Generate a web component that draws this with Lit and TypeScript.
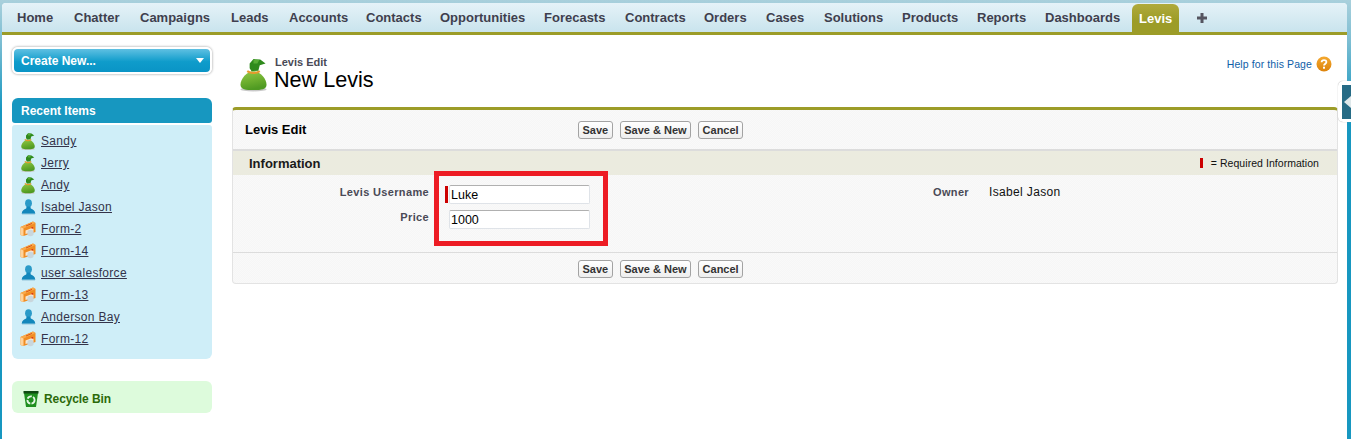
import { LitElement, html, css } from 'lit';
import { customElement } from 'lit/decorators.js';

// width is the distance to the next tab's text, so the strip keeps its rhythm
const TABS = [
  { name: 'Home', w: 57 },
  { name: 'Chatter', w: 66 },
  { name: 'Campaigns', w: 91 },
  { name: 'Leads', w: 58 },
  { name: 'Accounts', w: 77 },
  { name: 'Contacts', w: 74 },
  { name: 'Opportunities', w: 104 },
  { name: 'Forecasts', w: 81 },
  { name: 'Contracts', w: 79 },
  { name: 'Orders', w: 62 },
  { name: 'Cases', w: 58 },
  { name: 'Solutions', w: 78 },
  { name: 'Products', w: 75 },
  { name: 'Reports', w: 68 },
  { name: 'Dashboards', w: 87 },
];

type Kind = 'bag' | 'person' | 'form';

const RECENT: { name: string; kind: Kind }[] = [
  { name: 'Sandy', kind: 'bag' },
  { name: 'Jerry', kind: 'bag' },
  { name: 'Andy', kind: 'bag' },
  { name: 'Isabel Jason', kind: 'person' },
  { name: 'Form-2', kind: 'form' },
  { name: 'Form-14', kind: 'form' },
  { name: 'user salesforce', kind: 'person' },
  { name: 'Form-13', kind: 'form' },
  { name: 'Anderson Bay', kind: 'person' },
  { name: 'Form-12', kind: 'form' },
];

// money bag, same drawing for the 34px header icon and the small list icon
function bagIcon(w: number, h: number) {
  return html`<svg width=${w} height=${h} viewBox="0 0 28 34">
    <defs>
      <linearGradient id="bagBody" x1="0" y1="0" x2="0.3" y2="1">
        <stop offset="0" stop-color="#93c94a" />
        <stop offset="0.6" stop-color="#6cae2e" />
        <stop offset="1" stop-color="#4f9a22" />
      </linearGradient>
    </defs>
    <ellipse cx="14" cy="32" rx="13.5" ry="2" fill="#c9c9c9" />
    <path d="M14 13C21 13 27.5 21 27.5 27C27.5 32 22 32.5 14 32.5C6 32.5 0.5 32 0.5 27C0.5 21 7 13 14 13Z" fill="url(#bagBody)" />
    <path d="M7.5 13C11 15.5 17 15.5 20.5 13" fill="none" stroke="#e79a2c" stroke-width="2.2" />
    <path d="M10 5L14 0.5L21 1L26.5 5L20.5 7L19 12.5L12 13L10 10Z" fill="#2f8a1c" />
    <path d="M14 1L20 1.5L18 5L14 5Z" fill="#57ad35" />
  </svg>`;
}

function personIcon() {
  return html`<svg width="15" height="16" viewBox="0 0 15 16">
    <ellipse cx="7.5" cy="4.2" rx="3.4" ry="4" fill="#2a9ac8" />
    <path d="M5.6 7.5L9.4 7.5L9.8 9.6C12 10.3 14 11.5 14.3 14.8L0.7 14.8C1 11.5 3 10.3 5.2 9.6Z" fill="#1287bb" />
    <rect x="1" y="14.8" width="13" height="1" fill="#a9d3e4" />
  </svg>`;
}

function formIcon() {
  return html`<svg width="16" height="16" viewBox="0 0 16 16">
    <path d="M0.5 6L13 0.5L15.5 2L15.5 11L3.5 15L0.5 14Z" fill="#f08c22" />
    <path d="M0.5 6L13 0.5L15.5 2L3.5 7.5Z" fill="#f9a94a" />
    <path d="M3.5 7.5L3.5 15L0.5 14L0.5 6Z" fill="#ffd39a" />
    <path d="M5.5 9.5L12 7L13.5 8L13.5 10.5L5.5 13Z" fill="#f4e6d4" />
    <circle cx="10.5" cy="12" r="3.2" fill="#c9d6dc" />
    <path d="M6 5L12 2.4" stroke="#d9541a" stroke-width="1" />
    <rect x="11.5" y="6" width="1.6" height="1.6" fill="#d9341a" />
  </svg>`;
}

function recycleIcon() {
  return html`<svg width="16" height="18" viewBox="0 0 16 18">
    <path d="M1 3L15 3L13 17L3 17Z" fill="#1f8f1f" />
    <rect x="0.5" y="1" width="15" height="2.5" fill="#0f4a12" />
    <circle cx="8" cy="10" r="3.6" fill="none" stroke="#e6f7e6" stroke-width="1.8" stroke-dasharray="5 1.2" />
  </svg>`;
}

function helpIcon() {
  return html`<svg width="16" height="16" viewBox="0 0 16 16">
    <defs>
      <linearGradient id="helpFill" x1="0" y1="0" x2="0" y2="1">
        <stop offset="0" stop-color="#f4a82f" />
        <stop offset="1" stop-color="#dd830b" />
      </linearGradient>
    </defs>
    <circle cx="8" cy="8" r="7.5" fill="url(#helpFill)" />
    <path d="M5.6 6.2C5.7 3.4 10.4 3.4 10.4 6C10.4 7.6 8 7.8 8 9.6" fill="none" stroke="#fff" stroke-width="1.8" />
    <rect x="7" y="10.7" width="2" height="2" fill="#fff" />
  </svg>`;
}

const ICONS: Record<Kind, () => unknown> = {
  bag: () => bagIcon(14, 17),
  person: personIcon,
  form: formIcon,
};

@customElement('app-root')
export class AppRoot extends LitElement {
  static styles = css`
    :host {
      display: block;
      font-family: 'Liberation Sans', Arial, sans-serif;
    }
    .shell {
      position: relative;
      box-sizing: border-box;
      width: 1351px;
      height: 439px;
      overflow: hidden;
      padding: 3px 4px 0 2px;
      background: linear-gradient(#a9d0dc 0, #7fbfd3 40px, #1797c0 110px);
    }
    .page {
      height: 100%;
      background: #fff;
      border-radius: 4px 4px 0 0;
    }

    /* tab strip */
    .tabs {
      box-sizing: border-box;
      display: flex;
      height: 32px;
      padding-left: 15px;
      border-bottom: 3px solid #9c9c28;
      border-radius: 4px 4px 0 0;
      background: linear-gradient(#e5f2f8, #c9e4ed);
    }
    .tab {
      display: flex;
      flex: none;
      align-items: center;
      font-size: 13px;
      font-weight: 700;
      color: #3f3f4e;
      white-space: nowrap;
    }
    .tab.on {
      margin: 1px 0 0 0;
      padding: 0 7px;
      border-radius: 6px 6px 0 0;
      color: #fff;
      background: linear-gradient(#b0aa3c, #9c9c28 60%);
    }
    .plus {
      display: flex;
      align-items: center;
      padding-left: 18px;
    }

    .body {
      display: flex;
      gap: 20px;
      padding: 12px 0 0 10px;
    }

    /* sidebar */
    .side {
      flex: none;
      width: 200px;
    }
    .create {
      box-sizing: border-box;
      display: flex;
      align-items: center;
      justify-content: space-between;
      height: 27px;
      padding: 0 6px 0 7px;
      border: 2px solid #fff;
      border-radius: 6px;
      box-shadow: 0 0 2px 1px #cfcfcf;
      font-size: 12px;
      font-weight: 700;
      color: #fff;
      background: linear-gradient(#5fc0e2, #0f9ccb 55%, #0a94c6);
    }
    .caret {
      width: 0;
      height: 0;
      border-left: 4px solid transparent;
      border-right: 4px solid transparent;
      border-top: 5px solid #fff;
    }
    .recent-head {
      box-sizing: border-box;
      height: 25px;
      margin-top: 24px;
      padding: 0 9px;
      line-height: 26px;
      border-radius: 6px 6px 3px 3px;
      font-size: 12px;
      font-weight: 700;
      color: #fff;
      background: #1797c0;
    }
    .recent {
      margin-top: 2px;
      padding: 5px 0 9px;
      border-radius: 3px 3px 6px 6px;
      background: #cfeef8;
    }
    .item {
      display: flex;
      align-items: center;
      height: 22px;
      font-size: 12px;
      letter-spacing: 0.3px;
    }
    .item-icon {
      display: flex;
      flex: none;
      justify-content: center;
      width: 16px;
      margin: 0 5px 0 8px;
    }
    .item a {
      color: #33334a;
      text-decoration: underline;
    }
    .bin {
      box-sizing: border-box;
      display: flex;
      align-items: center;
      gap: 5px;
      height: 32px;
      margin-top: 22px;
      padding: 3px 0 0 11px;
      border-radius: 6px;
      font-size: 12px;
      font-weight: 700;
      letter-spacing: -0.1px;
      color: #2c6a0a;
      background: #ddfbdc;
    }

    /* main column */
    .main {
      flex: none;
      width: 1106px;
    }
    .head {
      box-sizing: border-box;
      display: flex;
      align-items: flex-start;
      height: 60px;
      padding: 11px 6px 0 8px;
    }
    .head-icon {
      margin-right: 7px;
      line-height: 0;
    }
    .head-text {
      flex: 1;
      margin-top: -2px;
    }
    .crumb {
      padding-left: 1px;
      font-size: 11px;
      font-weight: 700;
      line-height: 12px;
      color: #4a4a56;
    }
    .title {
      font-size: 21.6px;
      line-height: 24px;
      color: #000;
    }
    .help {
      display: flex;
      align-items: center;
      gap: 4px;
      margin-top: -2px;
      font-size: 10.5px;
      letter-spacing: 0.1px;
      color: #0f5ea8;
    }

    .card {
      border: 1px solid #e3e3e3;
      border-top: 3px solid #9c9c28;
      border-radius: 4px;
      background: repeating-conic-gradient(#f9f9f9 0 25%, #f6f6f6 0 50%) 0 0 / 2px 2px;
    }
    .bar {
      display: grid;
      grid-template-columns: 333px auto;
      align-items: center;
      padding-left: 12px;
    }
    .bar.top {
      height: 39px;
      border-bottom: 2px solid #dcdcdc;
    }
    .bar.bottom {
      height: 31px;
      padding-top: 1px;
      box-sizing: border-box;
      border-top: 1px solid #dcdcdc;
    }
    .bar-title {
      font-size: 13px;
      font-weight: 700;
      color: #000;
    }
    .btns {
      display: flex;
      gap: 7px;
    }
    .btn {
      box-sizing: border-box;
      height: 18px;
      padding: 0 3.5px;
      line-height: 16px;
      border: 1px solid #a3a3a3;
      border-radius: 3px;
      font-size: 11px;
      font-weight: 700;
      color: #333;
      background: linear-gradient(#fff, #eee);
      white-space: nowrap;
    }
    .section {
      display: flex;
      align-items: center;
      justify-content: space-between;
      height: 24px;
      padding: 0 18px 0 16px;
      background: #ebebdf;
    }
    .section b {
      font-size: 13px;
      color: #1a1a1a;
    }
    .legend {
      display: flex;
      align-items: center;
      gap: 8px;
      font-size: 10.5px;
      letter-spacing: 0.05px;
      color: #111;
    }
    .req-mark {
      width: 3px;
      height: 10px;
      background: #c00;
    }
    .form {
      position: relative;
      box-sizing: border-box;
      display: grid;
      grid-template-columns: 196px 271px 269px auto;
      grid-auto-rows: 25px;
      height: 77px;
      padding-top: 10px;
    }
    .label {
      padding-top: 1px;
      line-height: 13px;
      font-size: 11px;
      font-weight: 700;
      letter-spacing: 0.35px;
      color: #4a4a56;
      text-align: right;
    }
    .field {
      position: relative;
      padding-left: 20px;
    }
    .input {
      box-sizing: border-box;
      width: 141px;
      height: 19px;
      padding-left: 1px;
      line-height: 18px;
      border: 1px solid #dfe3e8;
      border-top-color: #b0b0b0;
      border-radius: 2px;
      font-size: 12.5px;
      color: #000;
      background: #fff;
    }
    .field .mark {
      position: absolute;
      left: 16px;
      top: 1px;
      width: 3px;
      height: 17px;
      background: #c00;
    }
    .value {
      padding: 1px 0 0 20px;
      line-height: 13px;
      font-size: 12px;
      letter-spacing: 0.35px;
      color: #111;
    }

    /* annotation drawn over the form */
    .callout {
      position: absolute;
      left: 201px;
      top: -4px;
      box-sizing: border-box;
      width: 174px;
      height: 75px;
      border: 5px solid #ed1c24;
    }

    /* collapsed side panel handle */
    .handle {
      position: absolute;
      right: 0;
      top: 81px;
      box-sizing: border-box;
      width: 13px;
      height: 41px;
      padding: 4px 0 3px 4px;
      border-radius: 5px 0 0 5px;
      background: #fff;
      box-shadow: 0 0 1px #999;
    }
    .handle div {
      display: flex;
      align-items: center;
      height: 100%;
      padding-left: 2px;
      background: #266b85;
    }
    .handle i {
      width: 0;
      height: 0;
      border-top: 6px solid transparent;
      border-bottom: 6px solid transparent;
      border-right: 7px solid #dfe8ea;
    }
  `;

  private buttons() {
    return html`<div class="btns">
      <div class="btn">Save</div>
      <div class="btn">Save &amp; New</div>
      <div class="btn">Cancel</div>
    </div>`;
  }

  render() {
    return html`
      <div class="shell">
        <div class="page">
          <div class="tabs">
            ${TABS.map((t) => html`<div class="tab" style="width:${t.w}px">${t.name}</div>`)}
            <div class="tab on">Levis</div>
            <div class="plus">
              <svg width="10" height="10" viewBox="0 0 10 10">
                <path d="M3.5 0H6.5V3.5H10V6.5H6.5V10H3.5V6.5H0V3.5H3.5Z" fill="#555560" />
              </svg>
            </div>
          </div>

          <div class="body">
            <div class="side">
              <div class="create"><span>Create New...</span><span class="caret"></span></div>
              <div class="recent-head">Recent Items</div>
              <div class="recent">
                ${RECENT.map(
                  (r) => html`<div class="item">
                    <span class="item-icon">${ICONS[r.kind]()}</span>
                    <a>${r.name}</a>
                  </div>`,
                )}
              </div>
              <div class="bin">${recycleIcon()}<span>Recycle Bin</span></div>
            </div>

            <div class="main">
              <div class="head">
                <div class="head-icon">${bagIcon(27, 34)}</div>
                <div class="head-text">
                  <div class="crumb">Levis Edit</div>
                  <div class="title">New Levis</div>
                </div>
                <div class="help"><span>Help for this Page</span>${helpIcon()}</div>
              </div>

              <div class="card">
                <div class="bar top">
                  <div class="bar-title">Levis Edit</div>
                  ${this.buttons()}
                </div>
                <div class="section">
                  <b>Information</b>
                  <div class="legend"><span class="req-mark"></span><span>= Required Information</span></div>
                </div>
                <div class="form">
                  <div class="label">Levis Username</div>
                  <div class="field"><span class="mark"></span><div class="input">Luke</div></div>
                  <div class="label">Owner</div>
                  <div class="value">Isabel Jason</div>
                  <div class="label">Price</div>
                  <div class="field"><div class="input">1000</div></div>
                  <div class="callout"></div>
                </div>
                <div class="bar bottom">
                  <div></div>
                  ${this.buttons()}
                </div>
              </div>
            </div>
          </div>
        </div>
        <div class="handle"><div><i></i></div></div>
      </div>
    `;
  }
}
